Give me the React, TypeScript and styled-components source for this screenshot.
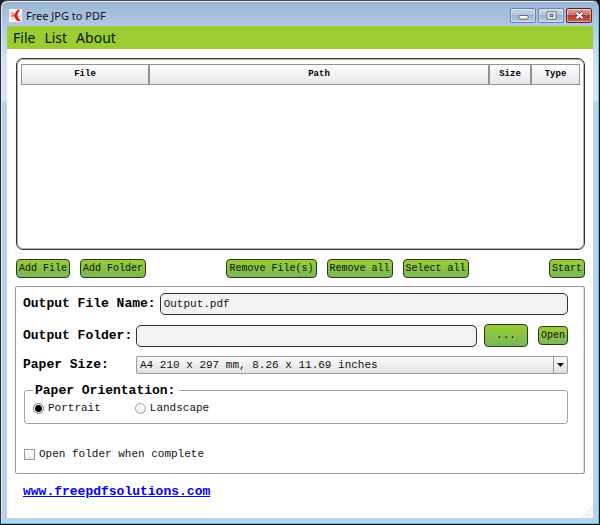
import React, { useState } from "react";
import styled, { createGlobalStyle } from "styled-components";

const GlobalStyle = createGlobalStyle`
  *, *::before, *::after { box-sizing: border-box; }
  body { margin: 0; background: #1c1c1c; }
`;

const mono = `"Liberation Mono", monospace`;
const ui = `"Noto Sans", "Open Sans", sans-serif`;

const Window = styled.div`
  min-height: 100vh;
  display: flex;
  flex-direction: column;
  padding: 0 6px 6px 5px;
  border: 1px solid #2b2f36;
  border-top-color: #4c4c4c;
  border-right-color: #000;
  border-bottom-color: #000;
  border-radius: 7px 7px 0 0;
  background: linear-gradient(#9ab5d4 0, #b2cae6 26px, #d3e2f3 60px, #d6e5f5 99px, #b9d1ea 102px);
  box-shadow: inset -1px -1px 0 #45cdf2, inset 1px 1px 0 #dfeaf6;
  font-family: ${mono};
  color: #000;
`;

const TitleBar = styled.header`
  display: flex;
  align-items: center;
  gap: 4px;
  height: 25px;
  padding: 4px 1px 0 3px;
`;

const Title = styled.h1`
  flex: 1;
  margin: 0;
  font: 400 11px/16px ${ui};
  color: #10151c;
`;

const Controls = styled.div`
  display: flex;
  gap: 2px;
`;

const ControlButton = styled.button<{ $close?: boolean }>`
  display: flex;
  align-items: center;
  justify-content: center;
  width: 26px;
  height: 15px;
  padding: 0;
  border: 1px solid ${(p) => (p.$close ? "#5a1f28" : "#6b82a0")};
  border-radius: 2px;
  background: ${(p) =>
    p.$close
      ? "linear-gradient(#e0a096 0, #cf7468 45%, #b93a2a 50%, #d0604c 100%)"
      : "linear-gradient(#c4d5e9 0, #b3c8e1 45%, #9cb5d3 50%, #b6cbe4 100%)"};
  box-shadow: inset 0 0 0 1px rgba(255, 255, 255, 0.45);
`;

const Client = styled.div`
  flex: 1;
  display: flex;
  flex-direction: column;
  margin-left: 1px;
  background: #fff;
`;

const MenuBar = styled.nav`
  display: flex;
  align-items: center;
  gap: 9px;
  height: 23px;
  padding: 0 6px;
  background: #9acd32;
`;

const MenuItem = styled.button`
  padding: 0;
  border: 0;
  background: none;
  font: 400 14px/22px ${ui};
  color: #0c1403;
`;

const Content = styled.main`
  flex: 1;
  display: flex;
  flex-direction: column;
  padding: 9px 8px 0;
`;

const ListFrame = styled.section`
  flex: 1;
  margin: 0 0 0 1px;
  padding: 5px 4px;
  border: 1px solid #333;
  border-radius: 7px;
  box-shadow: inset 0 0 0 1px #b4b4b4;
`;

const FileTable = styled.table`
  width: 100%;
  table-layout: fixed;
  border-collapse: separate;
  border-spacing: 0;
`;

const Column = styled.col<{ $width?: number }>`
  ${(p) => (p.$width ? `width: ${p.$width}px;` : "")}
`;

const HeadCell = styled.th`
  height: 21px;
  padding: 0;
  border: 1px solid #929292;
  background: linear-gradient(#fcfcfd, #e6e7ea);
  font: 700 9px/15px ${mono};
`;

const Actions = styled.div`
  display: flex;
  align-items: center;
  gap: 10px;
  padding: 9px 0 8px 1px;
`;

const Spacer = styled.div`
  flex: 1;
`;

const MiddleGroup = styled.div`
  display: flex;
  gap: 10px;
`;

const GreenButton = styled.button<{ $wide?: boolean }>`
  flex: none;
  ${(p) => (p.$wide ? "width: 44px;" : "")}
  height: ${(p) => (p.$wide ? 23 : 19)}px;
  padding: 0 2px;
  border: 1px solid #2c3a1c;
  border-radius: 4px;
  background: linear-gradient(#9acd32, #78b858);
  font: 400 ${(p) => (p.$wide ? 11 : 10)}px/15px ${mono};
  color: #0b1206;
  white-space: nowrap;
`;

const Panel = styled.form`
  display: flex;
  flex-direction: column;
  padding: 6px 16px 12px 7px;
  border: 1px solid #979797;
  border-radius: 2px;
  box-shadow: inset -1px 0 0 #dcdcdc;
`;

const Row = styled.div`
  display: flex;
  align-items: center;
  gap: 4px;
  margin-bottom: 9px;
`;

const RowButtons = styled.div`
  display: flex;
  align-items: center;
  gap: 10px;
  margin-left: 3px;
`;

const Label = styled.label`
  flex: none;
  min-width: 109px;
  font: 700 13px/18px ${mono};
  white-space: nowrap;
`;

const TextInput = styled.input`
  flex: 1;
  min-width: 0;
  height: 22px;
  padding: 0 3px;
  border: 1px solid #2e2e2e;
  border-radius: 5px;
  outline: none;
  background: #f1f2f4;
  font: 400 11px/18px ${mono};
  color: #111;
`;

const SelectBox = styled.div`
  flex: 1;
  display: grid;
  grid-template-columns: 1fr 14px;
  height: 18px;
  border: 1px solid #9b9b9b;
  border-radius: 2px;
  background: linear-gradient(#fbfbfc, #dfe0e2);
`;

const Select = styled.select`
  grid-area: 1 / 1 / 2 / 3;
  appearance: none;
  padding: 0 3px;
  border: 0;
  outline: none;
  background: transparent;
  font: 400 11px/16px ${mono};
  color: #111;
`;

const SelectArrow = styled.span`
  grid-area: 1 / 2 / 2 / 3;
  display: flex;
  align-items: center;
  justify-content: center;
  border-left: 1px solid #9b9b9b;
  pointer-events: none;
`;

const Group = styled.fieldset`
  display: flex;
  gap: 34px;
  min-width: 0;
  margin: 0 0 23px 1px;
  padding: 3px 8px 8px;
  border: 1px solid #a3a3a3;
  border-radius: 3px;
`;

const Legend = styled.legend`
  padding: 0 4px 0 2px;
  font: 700 13px/15px ${mono};
`;

const Choice = styled.label`
  display: flex;
  align-items: center;
  gap: 4px;
  font: 400 11px/14px ${mono};
  color: #111;
`;

const Mark = styled.input`
  appearance: none;
  flex: none;
  width: 11px;
  height: 11px;
  margin: 0;
  border: 1px solid #999;
  background: linear-gradient(#fff, #ececec);

  &[type="radio"] {
    border-radius: 50%;
  }
  &[type="radio"]:checked {
    border-color: #777;
    background: radial-gradient(circle, #000 0 3px, #fff 4px);
  }
  &[type="checkbox"]:checked {
    background: #444;
    box-shadow: inset 0 0 0 2px #fff;
  }
`;

const ConfirmRow = styled.div`
  display: flex;
  padding-left: 1px;
`;

const Footer = styled.footer`
  display: flex;
  align-items: flex-end;
  justify-content: space-between;
  padding-left: 16px;
  height: 44px;
`;

const SiteLink = styled.a`
  align-self: center;
  margin-bottom: 8px;
  font: 700 13px/16px ${mono};
  color: #00f;
`;

const Logo = () => (
  <svg width="13" height="13" viewBox="0 0 13 13" aria-hidden="true">
    <rect width="13" height="13" fill="#f6f1f1" />
    <path d="M0.500 5.500L5 3.500M1 7l4.500 1M2 3l3.500 2M2.500 10.500l3.500-3" stroke="#e2958f" strokeWidth="0.900" />
    <path d="M2 6.500L6 4.300 6 8z" fill="#ea5a50" />
    <path d="M9.500 0.500L11 1.500C9 3 8.300 5 8.500 6.500 9 8.500 10 10 12 12L8.500 12C6.500 10.500 5.500 8.500 5.800 6 6.200 3.500 7.500 1.500 9.500 0.500z" fill="#dc1616" />
    <path d="M10 7.500l2.500-1" stroke="#e59a96" strokeWidth="0.800" />
  </svg>
);

const MinimizeIcon = () => (
  <svg width="11" height="9" viewBox="0 0 11 9" aria-hidden="true">
    <rect x="1" y="4.500" width="9" height="3.500" rx="0.800" fill="#fff" stroke="#5d6168" strokeWidth="0.900" />
  </svg>
);

const MaximizeIcon = () => (
  <svg width="11" height="9" viewBox="0 0 11 9" aria-hidden="true">
    <rect x="1" y="0.800" width="9" height="7.400" rx="0.800" fill="#f4f4f4" stroke="#5d6168" strokeWidth="0.900" />
    <rect x="3.900" y="3.200" width="3.200" height="2.500" fill="#a8bdd8" stroke="#5d6168" strokeWidth="0.900" />
  </svg>
);

const CloseIcon = () => (
  <svg width="11" height="9" viewBox="0 0 11 9" aria-hidden="true">
    <path d="M2.200 1.500l6.600 6M8.800 1.500l-6.600 6" stroke="#53404a" strokeWidth="3.400" />
    <path d="M2.400 1.700l6.200 5.600M8.600 1.700l-6.200 5.600" stroke="#fff" strokeWidth="2" />
  </svg>
);

const Grip = () => (
  <svg width="11" height="11" viewBox="0 0 11 11" aria-hidden="true">
    <path d="M0 11L11 0M3 11L11 3M6 11L11 6M9 11L11 9" stroke="#dadada" strokeWidth="0.900" />
  </svg>
);

const columns = [
  { name: "File", width: 128 },
  { name: "Path" },
  { name: "Size", width: 42 },
  { name: "Type", width: 49 },
];

export default function App() {
  const [name, setName] = useState("Output.pdf");
  const [folder, setFolder] = useState("");
  const [orientation, setOrientation] = useState("Portrait");

  return (
    <>
      <GlobalStyle />
      <Window>
        <TitleBar>
          <Logo />
          <Title>Free JPG to PDF</Title>
          <Controls>
            <ControlButton aria-label="Minimize"><MinimizeIcon /></ControlButton>
            <ControlButton aria-label="Maximize"><MaximizeIcon /></ControlButton>
            <ControlButton aria-label="Close" $close><CloseIcon /></ControlButton>
          </Controls>
        </TitleBar>
        <Client>
          <MenuBar>
            {["File", "List", "About"].map((item) => (
              <MenuItem key={item}>{item}</MenuItem>
            ))}
          </MenuBar>
          <Content>
            <ListFrame>
              <FileTable>
                <colgroup>
                  {columns.map((c) => <Column key={c.name} $width={c.width} />)}
                </colgroup>
                <thead>
                  <tr>
                    {columns.map((c) => <HeadCell key={c.name} scope="col">{c.name}</HeadCell>)}
                  </tr>
                </thead>
              </FileTable>
            </ListFrame>
            <Actions>
              <GreenButton>Add File</GreenButton>
              <GreenButton>Add Folder</GreenButton>
              <Spacer />
              <MiddleGroup>
                <GreenButton>Remove File(s)</GreenButton>
                <GreenButton>Remove all</GreenButton>
                <GreenButton>Select all</GreenButton>
              </MiddleGroup>
              <Spacer />
              <GreenButton>Start</GreenButton>
            </Actions>
            <Panel onSubmit={(e) => e.preventDefault()}>
              <Row>
                <Label htmlFor="name">Output File Name:</Label>
                <TextInput id="name" value={name} onChange={(e) => setName(e.target.value)} />
              </Row>
              <Row>
                <Label htmlFor="folder">Output Folder:</Label>
                <TextInput id="folder" value={folder} onChange={(e) => setFolder(e.target.value)} />
                <RowButtons>
                  <GreenButton type="button" $wide>...</GreenButton>
                  <GreenButton type="button">Open</GreenButton>
                </RowButtons>
              </Row>
              <Row>
                <Label htmlFor="size">Paper Size:</Label>
                <SelectBox>
                  <Select id="size">
                    <option>A4 210 x 297 mm, 8.26 x 11.69 inches</option>
                  </Select>
                  <SelectArrow>
                    <svg width="7" height="4" viewBox="0 0 7 4" aria-hidden="true">
                      <path d="M0 0h7L3.500 4z" fill="#111" />
                    </svg>
                  </SelectArrow>
                </SelectBox>
              </Row>
              <Group>
                <Legend>Paper Orientation:</Legend>
                {["Portrait", "Landscape"].map((o) => (
                  <Choice key={o}>
                    <Mark
                      type="radio"
                      name="orientation"
                      checked={orientation === o}
                      onChange={() => setOrientation(o)}
                    />
                    {o}
                  </Choice>
                ))}
              </Group>
              <ConfirmRow>
                <Choice>
                  <Mark type="checkbox" />
                  Open folder when complete
                </Choice>
              </ConfirmRow>
            </Panel>
          </Content>
          <Footer>
            <SiteLink href="#site">www.freepdfsolutions.com</SiteLink>
            <Grip />
          </Footer>
        </Client>
      </Window>
    </>
  );
}
